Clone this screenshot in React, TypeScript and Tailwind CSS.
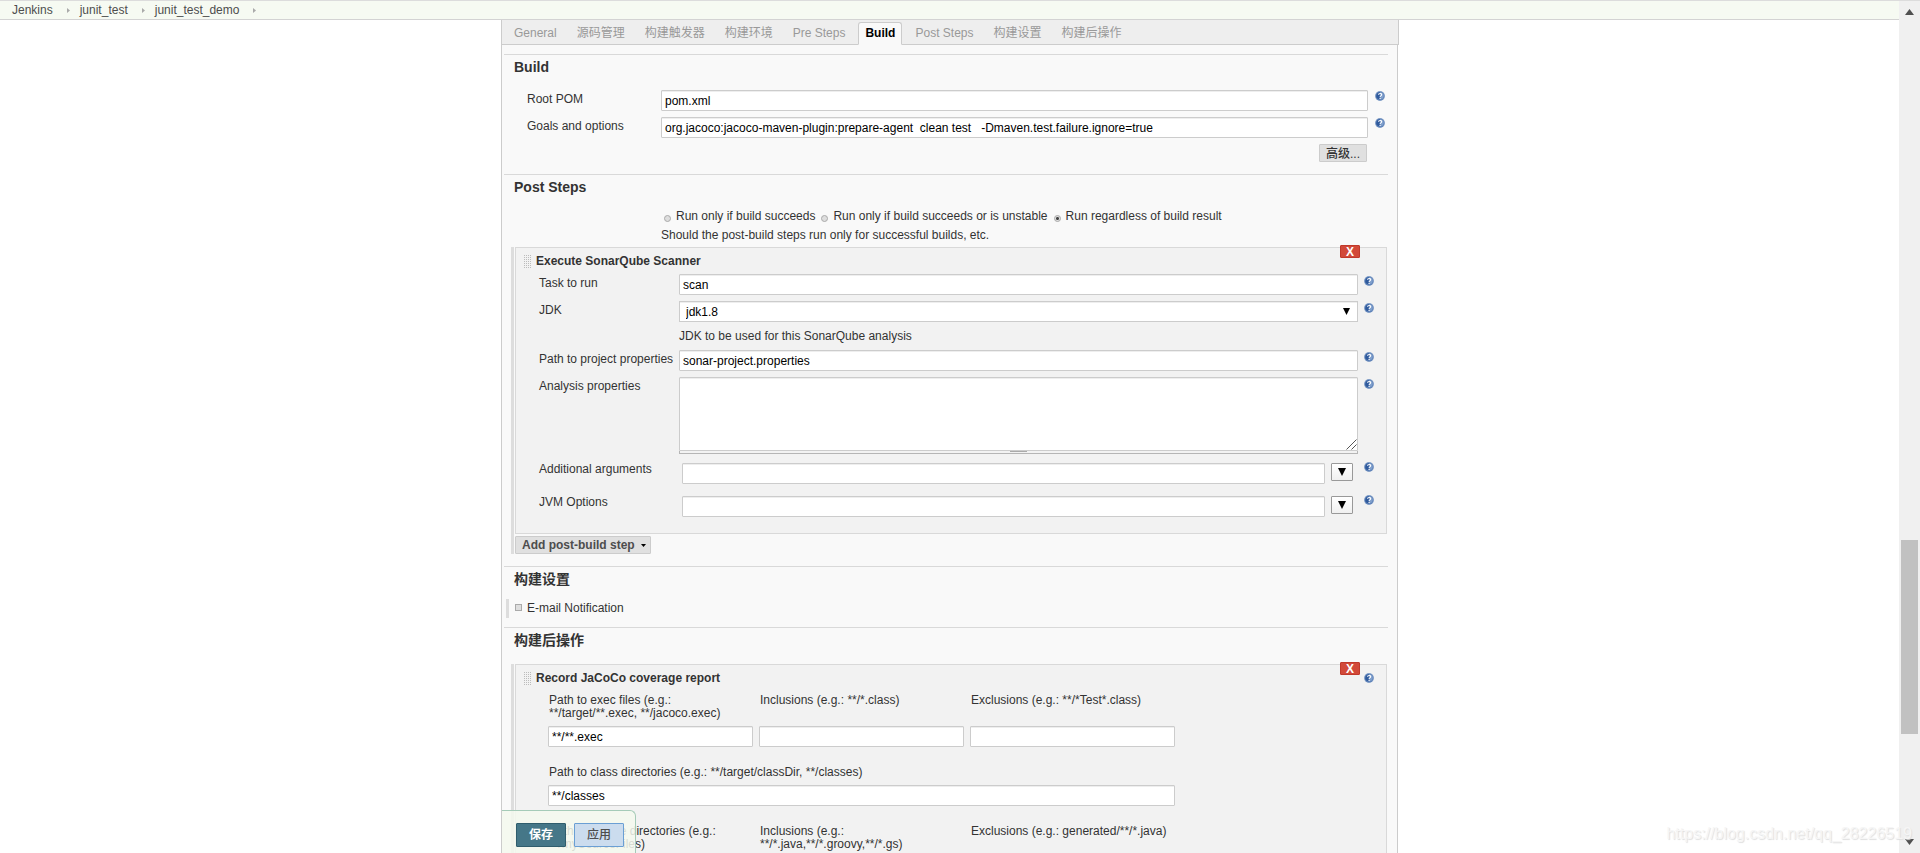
import { useState } from 'react';
import type { ReactNode } from 'react';

const crumbs = ['Jenkins', 'junit_test', 'junit_test_demo'];

const tabs = [
  'General',
  '源码管理',
  '构建触发器',
  '构建环境',
  'Pre Steps',
  'Build',
  'Post Steps',
  '构建设置',
  '构建后操作',
];

const runConditions = [
  'Run only if build succeeds',
  'Run only if build succeeds or is unstable',
  'Run regardless of build result',
];

const inputClass =
  'block h-[21px] w-full min-w-0 rounded-[1px] border border-[#ccc] bg-white px-[3px] text-black shadow-[inset_0_1px_0_#eee] outline-none';

const HelpIcon = () => (
  <a href="#help" aria-label="Help" className="block h-[10px] w-[10px] shrink-0">
    <svg viewBox="0 0 20 20" className="block h-full w-full">
      <circle cx="10" cy="10" r="10" fill="#9fb4d3" />
      <circle cx="10" cy="10" r="9" fill="#5f83b8" />
      <path d="M10 2.500a7.500 7.500 0 0 0-5.500 12.600L9 17z" fill="#2f5a9c" />
      <path d="M10 2.500a7.500 7.500 0 0 1 6 12.200L11 17z" fill="#7f9fcc" />
      <path
        d="M7 7.600c.2-3.600 6.600-3.600 6.400 0-.1 2.200-3.200 2-3.200 4.400M10.200 14v2.200"
        fill="none"
        stroke="#fff"
        strokeWidth="2.200"
      />
    </svg>
  </a>
);

const DragHandle = () => (
  <svg viewBox="0 0 7 13" className="h-[13px] w-[7px] shrink-0" shapeRendering="crispEdges">
    {[0, 2, 4, 6, 8, 10, 12].map((y) =>
      [0, 2, 4, 6].map((x) => <rect key={`${x}-${y}`} x={x} y={y} width="1" height="1" fill="#bcbcbc" />)
    )}
  </svg>
);

const Section = ({ title, className = '', children }: { title: string; className?: string; children: ReactNode }) => (
  <section className={`mr-[9px] ml-[2px] border-t border-[#d9d9d9] ${className}`}>
    <h2 className="pl-[10px] text-[14px] leading-[25px] font-bold">{title}</h2>
    {children}
  </section>
);

// label | control | help, used inside and outside of the step boxes
const Row = ({ id, label, nested, children }: { id: string; label: string; nested?: boolean; children: ReactNode }) => (
  <div className={`mb-[6px] flex items-start pl-[23px] ${nested ? 'pr-[12px]' : 'pr-[3px]'}`}>
    <label
      htmlFor={id}
      className={`shrink-0 leading-[18px] whitespace-nowrap ${nested ? 'w-[140px]' : 'w-[134px]'}`}
    >
      {label}
    </label>
    <div className="min-w-0 flex-1">{children}</div>
    <div className={nested ? 'pt-[2px] pl-[6px]' : 'pt-px pl-[7px]'}>
      <HelpIcon />
    </div>
  </div>
);

const StepBox = ({ title, help, children }: { title: string; help?: boolean; children: ReactNode }) => (
  <div className="relative border border-[#d9d9d9] bg-[#f2f2f2]">
    <button
      type="button"
      aria-label={`Delete ${title}`}
      className="absolute -top-[3px] right-[26px] flex h-[13px] w-[20px] items-center justify-center rounded-[1px] border border-[#c0392b] bg-[#d24939] text-[12px] leading-none font-bold text-white"
    >
      X
    </button>
    <div className="flex h-[26px] items-center gap-[5px] pr-[12px] pl-[8px]">
      <DragHandle />
      <h3 className="flex-1 font-bold">{title}</h3>
      {help && <HelpIcon />}
    </div>
    {children}
  </div>
);

const ExpandableField = ({ id }: { id: string }) => (
  <div className="flex items-start gap-[6px] py-[3px] pr-[5px] pl-[3px]">
    <input id={id} type="text" className={inputClass} />
    <button
      type="button"
      aria-label="Expand"
      className="flex h-[18px] w-[22px] shrink-0 items-center justify-center rounded-[1px] border border-[#999] bg-linear-to-b from-white to-[#f0f0f0]"
    >
      <svg viewBox="0 0 8 8" className="h-[8px] w-[8px]">
        <path d="M0 0h8L4 8z" fill="#000" />
      </svg>
    </button>
  </div>
);

const PathField = ({ id, label, value, wide }: { id: string; label: string; value?: string; wide?: boolean }) => (
  <div className={`flex flex-col justify-between gap-[6px] ${wide ? 'col-span-3' : ''}`}>
    <label htmlFor={id} className="pl-px leading-[13px]">
      {label}
    </label>
    <input id={id} type="text" defaultValue={value} className={inputClass} />
  </div>
);

const Scrollbar = () => (
  <div className="flex w-[21px] shrink-0 flex-col items-center justify-between border-t border-[#dcdcdc] bg-[#f0f0f0] py-[8px]">
    <svg viewBox="0 0 9 6" className="h-[6px] w-[9px]">
      <path d="M0 6L4.500 0 9 6z" fill="#505050" />
    </svg>
    <div className="flex w-[17px] flex-1 flex-col">
      <div className="grow-[524]" />
      <div className="h-[194px] bg-[#c1c1c1]" />
      <div className="grow-[105]" />
    </div>
    <svg viewBox="0 0 9 6" className="h-[6px] w-[9px]">
      <path d="M0 0h9L4.500 6z" fill="#505050" />
    </svg>
  </div>
);

export default function App() {
  const [activeTab, setActiveTab] = useState('Build');
  const [condition, setCondition] = useState(runConditions[2]);

  return (
    <div className="relative flex h-screen overflow-hidden bg-white font-['Liberation_Sans','Noto_Sans_CJK_SC',sans-serif] text-[12px] leading-[18px] text-[#333]">
      <div className="flex min-w-0 flex-1 flex-col">
        <nav className="flex h-[20px] shrink-0 items-center border-t border-b border-t-[#dcdcdc] border-b-[#d3d3d3] bg-[#f6faf2] pl-[12px] text-[#4d4d4d]">
          {crumbs.map((crumb) => (
            <div key={crumb} className="flex items-center">
              <a href="#crumb">{crumb}</a>
              <svg viewBox="0 0 3 5" className="mr-[10px] ml-[14px] h-[5px] w-[3px]">
                <path d="M0 0l3 2.500L0 5z" fill="#aaa" />
              </svg>
            </div>
          ))}
        </nav>

        <main className="relative mx-auto min-h-0 w-full max-w-[897px] flex-1 border-x border-[#ccc] bg-[#f9f9f9]">
          <div className="-mr-[2px] flex h-[25px] items-end gap-[6px] border-r border-b border-[#ccc] bg-[#eee] pl-[5px]">
            {tabs.map((tab) => (
              <button
                key={tab}
                type="button"
                onClick={() => setActiveTab(tab)}
                className={`-mb-px h-[23px] rounded-t-[3px] border px-[6px] leading-[19px] whitespace-nowrap ${
                  activeTab === tab
                    ? 'border-[#ccc] border-b-[#f9f9f9] bg-[#f9f9f9] font-bold text-black'
                    : 'border-transparent text-[#999]'
                }`}
              >
                {tab}
              </button>
            ))}
          </div>

          <form className="pt-[9px]" onSubmit={(e) => e.preventDefault()}>
            <Section title="Build" className="pb-[12px]">
              <div className="pt-[10px]">
                <Row id="root-pom" label="Root POM">
                  <input id="root-pom" type="text" defaultValue="pom.xml" className={inputClass} />
                </Row>
                <Row id="goals" label="Goals and options">
                  <input
                    id="goals"
                    type="text"
                    defaultValue="org.jacoco:jacoco-maven-plugin:prepare-agent  clean test   -Dmaven.test.failure.ignore=true"
                    className={inputClass}
                  />
                </Row>
                <div className="flex justify-end pr-[21px]">
                  <button
                    type="button"
                    className="flex h-[18px] items-center rounded-[1px] border border-[#ccc] bg-[#e0e0e0] px-[6px] pt-px font-medium"
                  >
                    高级...
                  </button>
                </div>
              </div>
            </Section>

            <Section title="Post Steps" className="pb-[12px]">
              <div className="pt-[6px] pl-[157px]">
                <div className="flex h-[20px] gap-[6px] pl-[3px] leading-[20px]">
                  {runConditions.map((text) => (
                    <label key={text} className="flex items-end gap-[5px] whitespace-nowrap">
                      <input
                        type="radio"
                        name="condition"
                        checked={condition === text}
                        onChange={() => setCondition(text)}
                        className="mb-1 h-[7px] w-[7px] appearance-none rounded-full border border-[#aaa] bg-[#dedede] checked:bg-[radial-gradient(circle,#444_0,#444_1px,#dedede_2px)]"
                      />
                      {text}
                    </label>
                  ))}
                </div>
                <p>Should the post-build steps run only for successful builds, etc.</p>
              </div>

              <div className="mt-[3px] mr-px ml-[7px] border-l-[3px] border-[#ddd] pl-px">
                <StepBox title="Execute SonarQube Scanner">
                  <div className="pb-[7px]">
                    <Row id="task" label="Task to run" nested>
                      <input id="task" type="text" defaultValue="scan" className={inputClass} />
                    </Row>
                    <Row id="jdk" label="JDK" nested>
                      <div className="relative">
                        <select
                          id="jdk"
                          className="block h-[21px] w-full appearance-none border border-[#ccc] bg-white px-[6px] text-black shadow-[inset_0_1px_0_#eee] outline-none"
                        >
                          <option>jdk1.8</option>
                        </select>
                        <svg viewBox="0 0 7 7" className="pointer-events-none absolute top-[7px] right-[8px] h-[7px] w-[7px]">
                          <path d="M0 0h7L3.500 7z" fill="#000" />
                        </svg>
                      </div>
                    </Row>
                    <p className="-mt-[6px] pl-[163px] leading-[28px]">JDK to be used for this SonarQube analysis</p>
                    <Row id="project-path" label="Path to project properties" nested>
                      <input id="project-path" type="text" defaultValue="sonar-project.properties" className={inputClass} />
                    </Row>
                    <Row id="analysis" label="Analysis properties" nested>
                      <div className="relative">
                        <textarea
                          id="analysis"
                          className="block h-[74px] w-full resize-none rounded-t-[1px] border border-[#ccc] bg-white px-[3px] text-black shadow-[inset_0_1px_0_#eee] outline-none"
                        />
                        <svg
                          viewBox="0 0 11 11"
                          className="pointer-events-none absolute right-[1px] bottom-[1px] h-[11px] w-[11px]"
                          fill="none"
                          stroke="#555"
                        >
                          <path d="M.5 10.500l10-10M5.500 10.500l5-5" />
                        </svg>
                      </div>
                      <div className="flex h-[3px] justify-center border-x border-b border-[#b5b5b5]">
                        <div className="h-px w-[17px] bg-[#aaa]" />
                      </div>
                    </Row>
                    <Row id="arguments" label="Additional arguments" nested>
                      <ExpandableField id="arguments" />
                    </Row>
                    <Row id="jvm" label="JVM Options" nested>
                      <ExpandableField id="jvm" />
                    </Row>
                  </div>
                </StepBox>
                <button
                  type="button"
                  className="mt-[2px] flex h-[18px] items-center gap-[6px] rounded-[1px] border border-[#ccc] bg-[#e0e0e0] px-[6px] font-bold text-[#4d4d4d]"
                >
                  Add post-build step
                  <svg viewBox="0 0 5 3" className="mr-[-2px] h-[3px] w-[5px]">
                    <path d="M0 0h5L2.500 3z" fill="#000" />
                  </svg>
                </button>
              </div>
            </Section>

            <Section title="构建设置" className="pb-[9px]">
              <label className="mt-[7px] ml-[2px] flex h-[19px] items-center gap-[5px] border-l-[3px] border-[#ddd] pb-[2px] pl-[6px]">
                <input
                  type="checkbox"
                  className="h-[7px] w-[7px] appearance-none border border-[#aaa] bg-[#dedede] checked:bg-[#333]"
                />
                E-mail Notification
              </label>
            </Section>

            <Section title="构建后操作">
              <div className="mt-[11px] mr-px ml-[7px] border-l-[3px] border-[#ddd] pl-px">
                <StepBox title="Record JaCoCo coverage report" help>
                  <div className="ml-[32px] grid max-w-[627px] grid-cols-3 gap-x-[6px] gap-y-[19px] pt-[3px] pb-[19px]">
                    <PathField
                      id="exec"
                      label="Path to exec files (e.g.: **/target/**.exec, **/jacoco.exec)"
                      value="**/**.exec"
                    />
                    <PathField id="exec-in" label="Inclusions (e.g.: **/*.class)" />
                    <PathField id="exec-out" label="Exclusions (e.g.: **/*Test*.class)" />
                    <PathField
                      id="classes"
                      label="Path to class directories (e.g.: **/target/classDir, **/classes)"
                      value="**/classes"
                      wide
                    />
                    <PathField id="source" label="Path to source directories (e.g.: **/mySourceFiles)" />
                    <PathField id="source-in" label="Inclusions (e.g.: **/*.java,**/*.groovy,**/*.gs)" />
                    <PathField id="source-out" label="Exclusions (e.g.: generated/**/*.java)" />
                  </div>
                </StepBox>
              </div>
            </Section>
          </form>

          <div className="absolute bottom-0 left-0 flex gap-[8px] rounded-tr-[6px] border-t border-r border-[#a5cbb8] bg-[#f5f9ef]/85 pt-[12px] pr-[11px] pb-[6px] pl-[14px]">
            <button
              type="button"
              className="h-[24px] w-[50px] rounded-[1px] border border-[#2f5d6d] bg-[#457788] font-bold text-white"
            >
              保存
            </button>
            <button
              type="button"
              className="h-[24px] w-[50px] rounded-[1px] border border-[#6a9fd4] bg-[#cbdcee] font-medium text-[#4d4d4d]"
            >
              应用
            </button>
          </div>
        </main>
      </div>

      <Scrollbar />

      <p className="pointer-events-none absolute right-[8px] bottom-[9px] text-[16px] leading-[20px] text-[#f6f6f6] [text-shadow:1px_1px_1px_#dedede]">
        https://blog.csdn.net/qq_28226519
      </p>
    </div>
  );
}
